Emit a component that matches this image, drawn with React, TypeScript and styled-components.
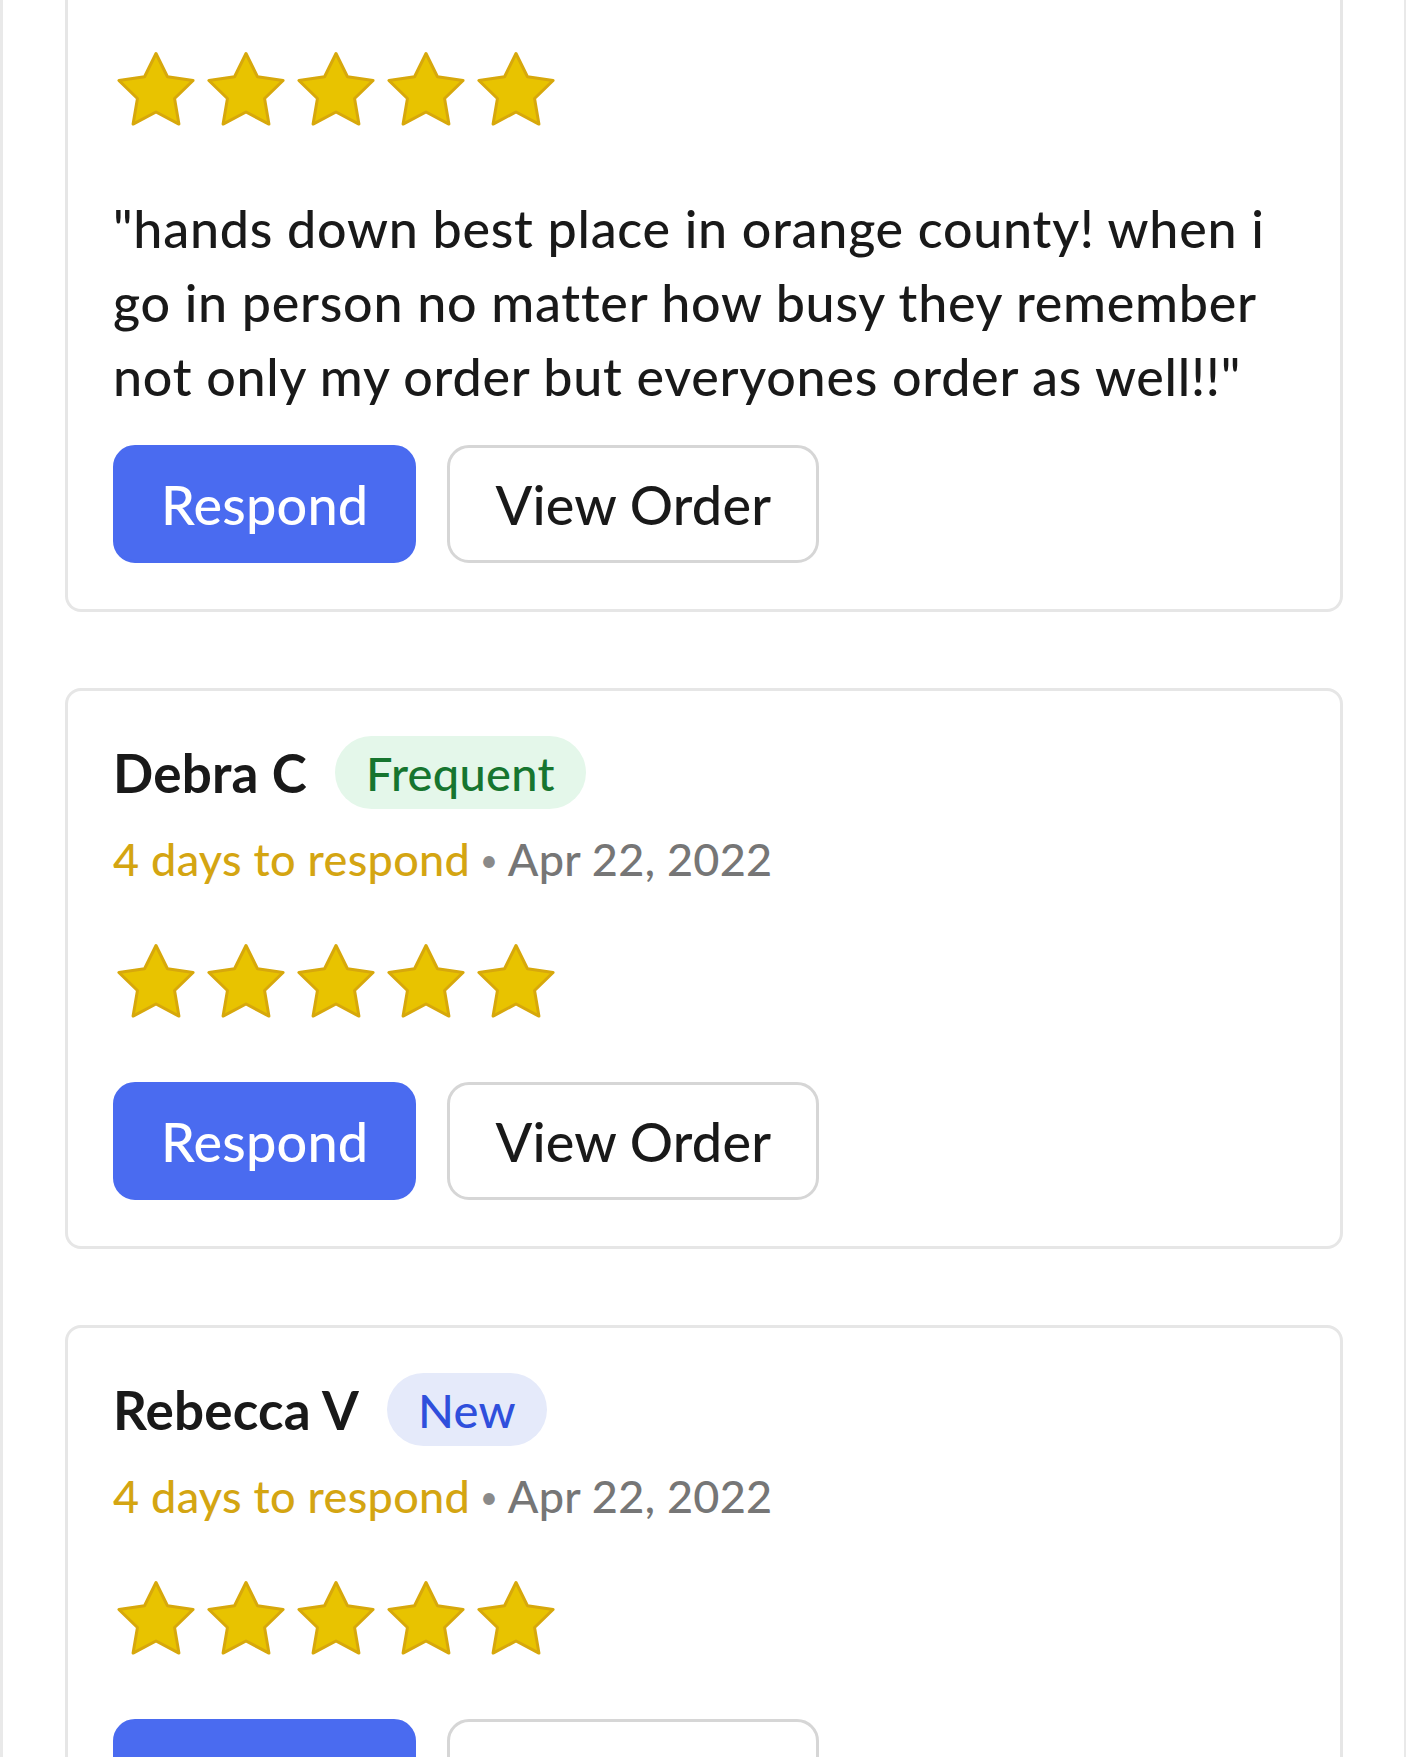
import React from "react";
import styled, { createGlobalStyle } from "styled-components";

const GlobalStyle = createGlobalStyle`
  html, body {
    margin: 0;
    padding: 0;
    background: #ffffff;
  }
  body {
    font-family: Lato, "Open Sans", "Liberation Sans", sans-serif;
    color: #191919;
    -webkit-font-smoothing: antialiased;
  }
  * { box-sizing: border-box; }
`;

const Page = styled.div`
  min-height: 100vh;
  background: #ffffff;
  border-left: 3px solid #e9e9e9;
  border-right: 2px solid #e9e9e9;
  padding: 0 61px 120px 62px;
  display: flex;
  flex-direction: column;
  gap: 76px;
`;

const Card = styled.section<{ $continued?: boolean }>`
  border: 3px solid #e6e6e6;
  border-radius: 16px;
  padding: 45px 45px 46px;
  display: flex;
  flex-direction: column;
  background: #ffffff;
  ${(p) =>
    p.$continued &&
    `
    border-top: none;
    border-top-left-radius: 0;
    border-top-right-radius: 0;
    padding-top: 51px;
  `}
`;

const Header = styled.div`
  display: flex;
  align-items: center;
  gap: 28px;
  height: 73px;
`;

const Name = styled.span`
  font-size: 53px;
  font-weight: 700;
  letter-spacing: 0.2px;
  color: #191919;
`;

const Badge = styled.span<{ $tone: "green" | "blue" }>`
  display: inline-flex;
  align-items: center;
  height: 73px;
  padding: 0 31px;
  border-radius: 37px;
  font-size: 47px;
  font-weight: 500;
  letter-spacing: 0.3px;
  background: ${(p) => (p.$tone === "green" ? "#e4f7ea" : "#e5eafa")};
  color: ${(p) => (p.$tone === "green" ? "#16752f" : "#2f4fdc")};
`;

const Meta = styled.div`
  margin-top: 19px;
  font-size: 45px;
  font-weight: 500;
  line-height: 63px;
  letter-spacing: 0.3px;
  color: #767676;
`;

const Due = styled.span`
  color: #d4a512;
`;

const Dot = styled.span`
  color: #8a8a8a;
  font-size: 30px;
  margin: 0 10px;
  position: relative;
  top: -5px;
`;

const Stars = styled.div<{ $first?: boolean }>`
  display: flex;
  gap: 6px;
  padding-left: 1px;
  margin-top: ${(p) => (p.$first ? "0" : "47px")};
`;

const StarSvg = styled.svg`
  width: 84px;
  height: 78px;
  display: block;
  flex: none;
`;

const ReviewText = styled.p`
  margin: 62px 0 0;
  font-size: 52px;
  font-weight: 500;
  line-height: 74px;
  letter-spacing: 0.75px;
  color: #191919;
`;

const Actions = styled.div<{ $afterText?: boolean }>`
  display: flex;
  gap: 31px;
  margin-top: ${(p) => (p.$afterText ? "32px" : "61px")};
`;

const Button = styled.button<{ $primary?: boolean }>`
  height: 118px;
  padding: 0 45px;
  border-radius: 22px;
  font-family: inherit;
  font-size: 54px;
  letter-spacing: 0.2px;
  font-weight: 500;
  cursor: pointer;
  background: ${(p) => (p.$primary ? "#4a6bf0" : "#ffffff")};
  color: ${(p) => (p.$primary ? "#ffffff" : "#191919")};
  border: ${(p) => (p.$primary ? "3px solid #4a6bf0" : "3px solid #d6d6d6")};
`;

function starPoints(cx: number, cy: number, R: number, r: number) {
  const pts: string[] = [];
  for (let i = 0; i < 10; i++) {
    const a = ((-90 + i * 36) * Math.PI) / 180;
    const rad = i % 2 === 0 ? R : r;
    pts.push(`${(cx + rad * Math.cos(a)).toFixed(2)},${(cy + rad * Math.sin(a)).toFixed(2)}`);
  }
  return pts.join(" ");
}

const STAR = starPoints(42, 41.5, 39, 19.5);

const Star = () => (
  <StarSvg viewBox="0 0 84 78" aria-hidden="true">
    <polygon
      points={STAR}
      fill="#e8c300"
      stroke="#d7a80b"
      strokeWidth={3}
      strokeLinejoin="round"
    />
  </StarSvg>
);

const Rating = ({ first }: { first?: boolean }) => (
  <Stars $first={first}>
    {[0, 1, 2, 3, 4].map((i) => (
      <Star key={i} />
    ))}
  </Stars>
);

type Review = {
  name?: string;
  badge?: { label: string; tone: "green" | "blue" };
  text?: string;
  continued?: boolean;
};

const reviews: Review[] = [
  {
    continued: true,
    text: '"hands down best place in orange county! when i go in person no matter how busy they remember not only my order but everyones order as well!!"',
  },
  { name: "Debra C", badge: { label: "Frequent", tone: "green" } },
  { name: "Rebecca V", badge: { label: "New", tone: "blue" } },
];

export default function App() {
  return (
    <>
      <GlobalStyle />
      <Page>
        {reviews.map((r, idx) => (
          <Card key={idx} $continued={r.continued}>
            {r.name && (
              <>
                <Header>
                  <Name>{r.name}</Name>
                  {r.badge && <Badge $tone={r.badge.tone}>{r.badge.label}</Badge>}
                </Header>
                <Meta>
                  <Due>4 days to respond</Due>
                  <Dot>•</Dot>
                  Apr 22, 2022
                </Meta>
              </>
            )}
            <Rating first={r.continued} />
            {r.text && <ReviewText>{r.text}</ReviewText>}
            <Actions $afterText={!!r.text}>
              <Button $primary>Respond</Button>
              <Button>View Order</Button>
            </Actions>
          </Card>
        ))}
      </Page>
    </>
  );
}
